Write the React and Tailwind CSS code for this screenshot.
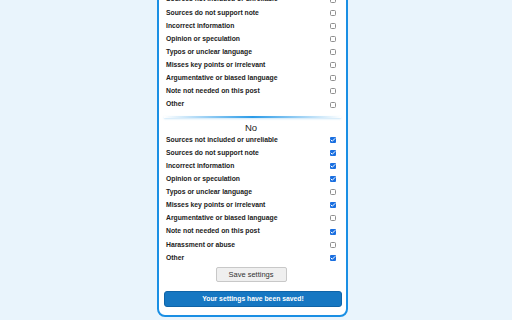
import { Check } from "lucide-react";

const yesItems = [
  ["Sources not included or unreliable", false],
  ["Sources do not support note", false],
  ["Incorrect information", false],
  ["Opinion or speculation", false],
  ["Typos or unclear language", false],
  ["Misses key points or irrelevant", false],
  ["Argumentative or biased language", false],
  ["Note not needed on this post", false],
  ["Other", false],
];

const noItems = [
  ["Sources not included or unreliable", true],
  ["Sources do not support note", true],
  ["Incorrect information", true],
  ["Opinion or speculation", true],
  ["Typos or unclear language", false],
  ["Misses key points or irrelevant", true],
  ["Argumentative or biased language", false],
  ["Note not needed on this post", true],
  ["Harassment or abuse", false],
  ["Other", true],
];

function Box({ checked }) {
  if (checked) {
    return (
      <span className="w-[6px] h-[6px] rounded-[1px] bg-[#1a6fe0] flex items-center justify-center">
        <Check size={6} strokeWidth={4} className="text-white" />
      </span>
    );
  }
  return <span className="w-[6px] h-[6px] rounded-[1.5px] border border-[#8f8f8f] bg-white" />;
}

function Row({ label, checked }) {
  return (
    <div className="h-[13.13px] flex items-center justify-between">
      <span className="text-[6.8px] font-bold text-[#222]">{label}</span>
      <Box checked={checked} />
    </div>
  );
}

export default function App() {
  return (
    <div
      className="w-[512px] h-[320px] overflow-hidden bg-[#e9f4fc]"
      style={{ fontFamily: '"Liberation Sans", Arial, sans-serif' }}
    >
      <div className="ml-[157px] w-[191px] -mt-[9px] bg-white border-2 border-[#1a8fe4] rounded-b-[8px] pl-[7px] pr-[10px] pb-[8px]">
        <div className="flex flex-col">
          {yesItems.map(([l, c]) => (
            <Row key={"y" + l} label={l} checked={c} />
          ))}
        </div>
        <div className="mt-[5px] -ml-[2px] -mr-[5px] h-[1.5px] bg-gradient-to-r from-transparent via-[#2a9be8] to-transparent shadow-[0_1px_2px_rgba(42,155,232,0.25)]" />
        <div className="text-center text-[9.5px] text-[#222] leading-none mt-[5px] mb-[1px]">No</div>
        <div className="flex flex-col">
          {noItems.map(([l, c]) => (
            <Row key={"n" + l} label={l} checked={c} />
          ))}
        </div>
        <div className="flex justify-center mt-[3px]">
          <button className="w-[71px] h-[15px] bg-[#efefef] border border-[#c8c8c8] rounded-[2px] text-[7.5px] text-[#333] leading-none">
            Save settings
          </button>
        </div>
        <div className="mt-[9px] -ml-[2px] -mr-[6px] h-[16px] bg-[#1677c2] border border-[#0f64a8] rounded-[3px] flex items-center justify-center text-[6.8px] font-bold text-white">
          Your settings have been saved!
        </div>
      </div>
    </div>
  );
}
